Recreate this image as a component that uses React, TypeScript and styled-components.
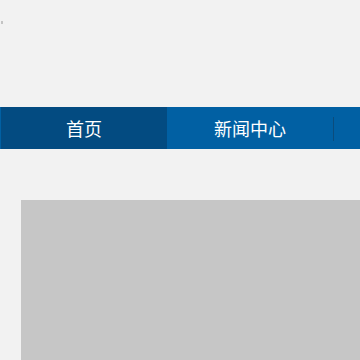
import React from "react";
import styled, { createGlobalStyle } from "styled-components";

const GlobalStyle = createGlobalStyle`
  html, body {
    margin: 0;
    padding: 0;
    background: #f2f2f2;
    overflow: hidden;
  }
  body {
    font-family: "Noto Sans CJK SC", "Liberation Sans", sans-serif;
  }
`;

const Page = styled.div`
  width: 360px;
  height: 360px;
  overflow: hidden;
  background: #f2f2f2;
`;

const Header = styled.header`
  height: 107px;
  position: relative;
`;

const Logo = styled.span`
  position: absolute;
  left: 1px;
  top: 21px;
  width: 2px;
  height: 3px;
  background: #c4c4c4;
`;

const Nav = styled.nav`
  display: flex;
  align-items: center;
  height: 42px;
  padding-left: 1px;
  background: #0160a3;
  width: 360px;
  overflow: hidden;
`;

const NavItem = styled.a<{ $active?: boolean }>`
  position: relative;
  flex: 0 0 166px;
  height: 100%;
  display: flex;
  align-items: center;
  justify-content: center;
  color: #ffffff;
  font-size: 18px;
  text-decoration: none;
  background: ${(p) => (p.$active ? "#034b81" : "transparent")};

  & + & {
    &::before {
      content: "";
      position: absolute;
      left: 0;
      top: 10px;
      bottom: 8px;
      width: 1px;
      background: ${(p) => (p.$active ? "transparent" : "#0b4c7c")};
    }
  }
`;

const Content = styled.main`
  padding: 51px 0 0 21px;
`;

const Banner = styled.div`
  height: 300px;
  background: #c6c6c6;
`;

export default function App() {
  return (
    <Page>
      <GlobalStyle />
      <Header>
        <Logo />
      </Header>
      <Nav>
        <NavItem $active>首页</NavItem>
        <NavItem>新闻中心</NavItem>
        <NavItem />
      </Nav>
      <Content>
        <Banner />
      </Content>
    </Page>
  );
}
